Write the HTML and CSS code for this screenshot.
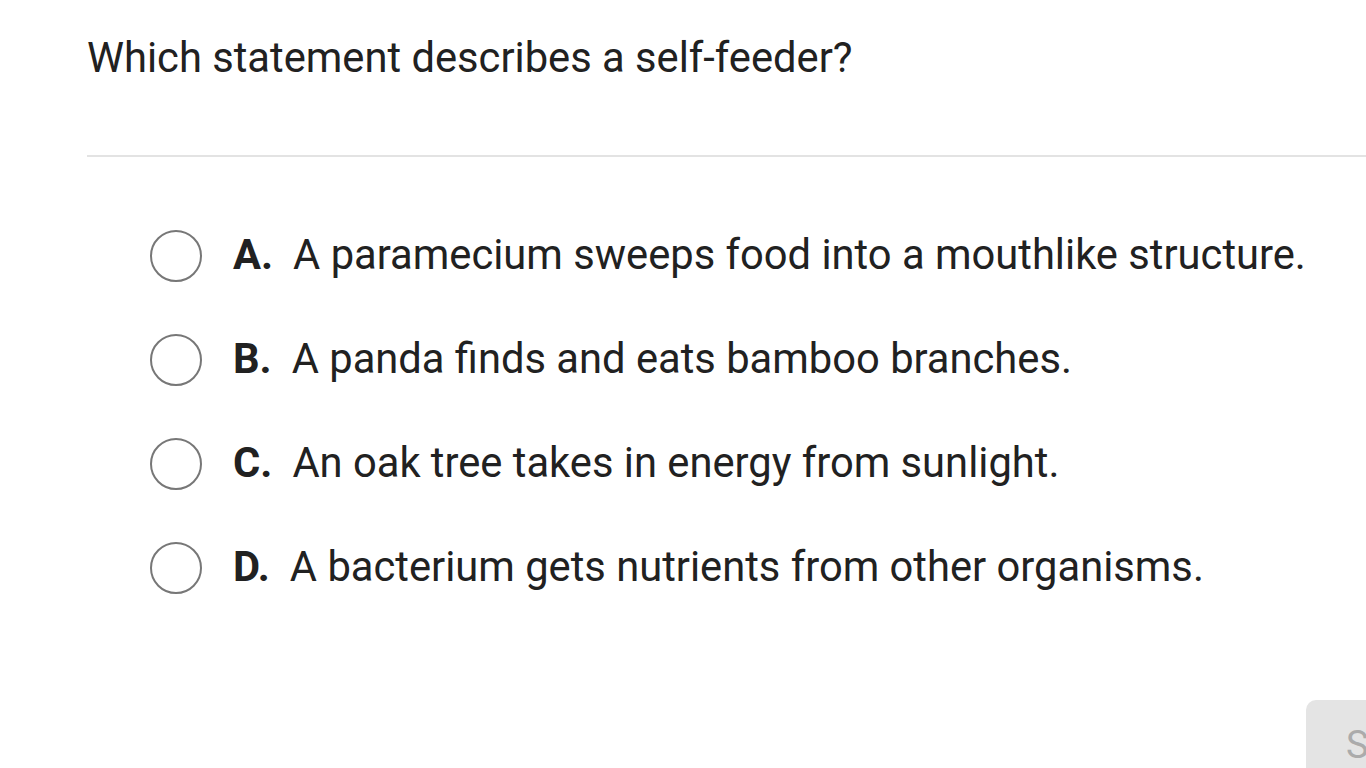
FILE: index.html
```html
<!DOCTYPE html>
<html>
<head>
<meta charset="utf-8">
<link rel="stylesheet" href="styles.css">
</head>
<body>
<div class="page">
  <h1 class="question">Which statement describes a self-feeder?</h1>
  <hr class="divider">
  <ul class="options">
    <li class="option"><span class="radio"></span><span class="letter">A.</span><span class="text">A paramecium sweeps food into a mouthlike structure.</span></li>
    <li class="option"><span class="radio"></span><span class="letter">B.</span><span class="text">A panda finds and eats bamboo branches.</span></li>
    <li class="option"><span class="radio"></span><span class="letter">C.</span><span class="text">An oak tree takes in energy from sunlight.</span></li>
    <li class="option"><span class="radio"></span><span class="letter">D.</span><span class="text">A bacterium gets nutrients from other organisms.</span></li>
  </ul>
  <div class="footer">
    <button class="submit">SUBMIT</button>
  </div>
</div>
</body>
</html>
```
FILE: styles.css
```css
html, body {
  margin: 0;
  padding: 0;
  background: #fff;
  overflow: hidden;
}
body {
  font-family: Roboto, "Liberation Sans", sans-serif;
  color: #212121;
}
.page {
  width: 1600px;
  padding-left: 86px;
  box-sizing: border-box;
}
.question {
  margin: 0;
  padding-top: 30px;
  font-size: 41.7px;
  font-weight: 400;
  line-height: 56px;
  padding-left: 1px;
}
.divider {
  margin: 69px 0 0 1px;
  border: 0;
  height: 2px;
  background: #e3e3e3;
}
.options {
  list-style: none;
  margin: 0;
  padding: 71px 0 0 64px;
}
.option {
  display: flex;
  align-items: center;
  height: 52px;
  margin-bottom: 52px;
  font-size: 41.7px;
}
.radio {
  width: 48px;
  height: 48px;
  border: 2px solid #777;
  border-radius: 50%;
  flex: none;
  margin-right: 31px;
  position: relative;
  top: 2px;
}
.letter {
  font-weight: 700;
  margin-right: 20px;
}
.footer {
  display: flex;
  padding-left: 1220px;
  padding-top: 56px;
}
.submit {
  font-family: Roboto, "Liberation Sans", sans-serif;
  font-size: 38px;
  color: #ababab;
  background: #e4e4e4;
  border: 0;
  border-radius: 10px;
  height: 90px;
  padding: 0 40px;
  text-align: left;
}
```
